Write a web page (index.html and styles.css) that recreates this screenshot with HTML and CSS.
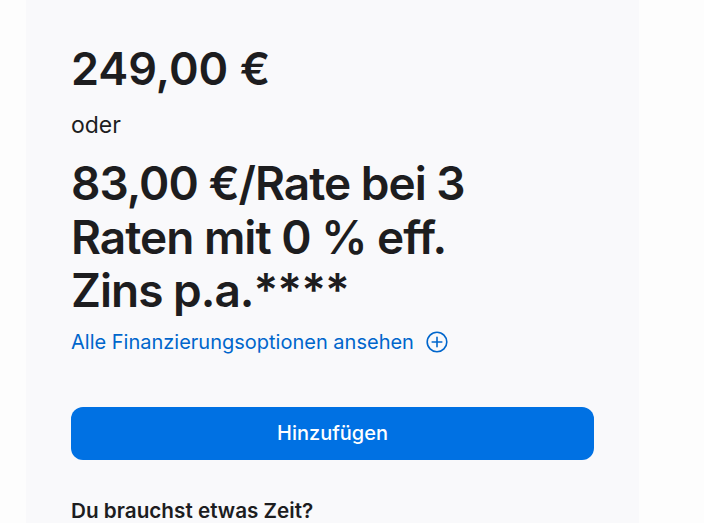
FILE: index.html
```html
<!DOCTYPE html>
<html lang="de">
<head>
<meta charset="utf-8">
<link rel="stylesheet" href="styles.css">
</head>
<body>
<div class="page">
  <section class="card">
    <div class="price">249,00 €</div>
    <div class="or">oder</div>
    <div class="rate">83,00 €/Rate bei 3 Raten mit 0 % eff. Zins p.a.****</div>
    <a class="options" href="#">Alle Finanzierungsoptionen ansehen
      <svg class="plus" width="22" height="22" viewBox="0 0 22 22" aria-hidden="true">
        <circle cx="11" cy="11" r="9.8" fill="none" stroke="#0066cc" stroke-width="1.6"/>
        <path d="M11 6.2v9.6M6.2 11h9.6" stroke="#0066cc" stroke-width="1.6" stroke-linecap="round"/>
      </svg>
    </a>
    <button class="add">Hinzufügen</button>
    <div class="time">Du brauchst etwas Zeit?</div>
  </section>
</div>
</body>
</html>
```
FILE: styles.css
```css
html, body {
  margin: 0;
  padding: 0;
  background: #fdfdfd;
  font-family: Inter, "Noto Sans", sans-serif;
  color: #1d1d1f;
}
.page {
  display: flex;
  padding-left: 26px;
  height: 523px;
  overflow: hidden;
}
.card {
  width: 613px;
  box-sizing: border-box;
  background: #f9f9fb;
  padding: 41px 45px 0 45px;
  display: flex;
  flex-direction: column;
  align-items: flex-start;
}
.price {
  font-size: 45px;
  font-weight: 600;
  line-height: 56px;
}
.or {
  font-size: 23px;
  line-height: 28px;
  margin-top: 14px;
}
.rate {
  font-size: 46px;
  font-weight: 600;
  line-height: 53.5px;
  letter-spacing: -1px;
  margin-top: 18px;
  width: 430px;
}
.options {
  display: flex;
  align-items: center;
  gap: 12px;
  color: #0066cc;
  text-decoration: none;
  font-size: 20px;
  line-height: 24px;
  margin-top: 12px;
}
.plus {
  display: block;
}
.add {
  margin-top: 53px;
  width: 523px;
  height: 53px;
  border: 0;
  border-radius: 12px;
  background: #0071e3;
  color: #fff;
  font-family: Inter, "Noto Sans", sans-serif;
  font-size: 20px;
  font-weight: 500;
}
.time {
  margin-top: 39px;
  font-size: 20.7px;
  font-weight: 600;
  line-height: 24px;
}
```
